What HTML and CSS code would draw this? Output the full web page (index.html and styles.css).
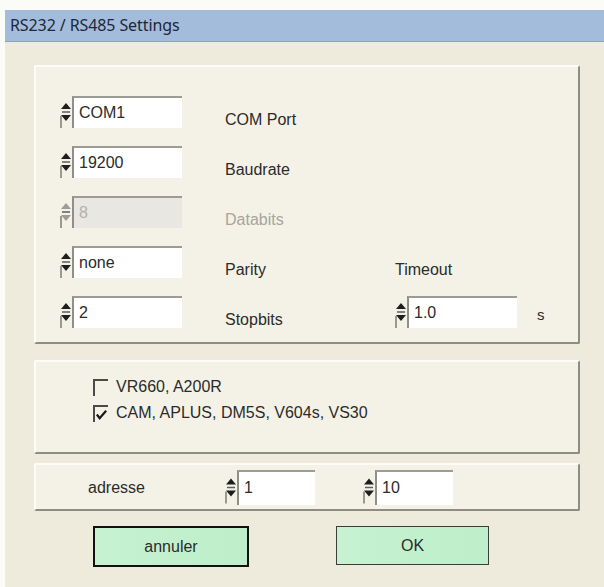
FILE: index.html
```html
<!DOCTYPE html>
<html lang="fr">
<head>
    <meta charset="UTF-8">
    <title>RS232 / RS485 Settings</title>
    <link rel="stylesheet" href="styles.css">
</head>
<body>
    <div class="window">
        <div class="titlebar">RS232 / RS485 Settings</div>
        <div class="client">

            <div class="panel ports">
                <div class="row">
                    <div class="spin"><svg class="arrows" viewBox="0 0 12 32"><polygon points="1,13 6,7 11,13"/><line x1="2" y1="16" x2="10" y2="16"/><polygon points="1,19 6,25 11,19"/><line class="edge" x1="1" y1="20" x2="1" y2="32"/></svg><div class="field">COM1</div></div>
                    <div class="label">COM Port</div>
                </div>
                <div class="row">
                    <div class="spin"><svg class="arrows" viewBox="0 0 12 32"><polygon points="1,13 6,7 11,13"/><line x1="2" y1="16" x2="10" y2="16"/><polygon points="1,19 6,25 11,19"/><line class="edge" x1="1" y1="20" x2="1" y2="32"/></svg><div class="field">19200</div></div>
                    <div class="label">Baudrate</div>
                </div>
                <div class="row disabled">
                    <div class="spin"><svg class="arrows" viewBox="0 0 12 32"><polygon points="1,13 6,7 11,13"/><line x1="2" y1="16" x2="10" y2="16"/><polygon points="1,19 6,25 11,19"/><line class="edge" x1="1" y1="20" x2="1" y2="32"/></svg><div class="field">8</div></div>
                    <div class="label">Databits</div>
                </div>
                <div class="row">
                    <div class="spin"><svg class="arrows" viewBox="0 0 12 32"><polygon points="1,13 6,7 11,13"/><line x1="2" y1="16" x2="10" y2="16"/><polygon points="1,19 6,25 11,19"/><line class="edge" x1="1" y1="20" x2="1" y2="32"/></svg><div class="field">none</div></div>
                    <div class="label">Parity</div>
                    <div class="label">Timeout</div>
                </div>
                <div class="row">
                    <div class="spin"><svg class="arrows" viewBox="0 0 12 32"><polygon points="1,13 6,7 11,13"/><line x1="2" y1="16" x2="10" y2="16"/><polygon points="1,19 6,25 11,19"/><line class="edge" x1="1" y1="20" x2="1" y2="32"/></svg><div class="field">2</div></div>
                    <div class="label">Stopbits</div>
                    <div class="spin"><svg class="arrows" viewBox="0 0 12 32"><polygon points="1,13 6,7 11,13"/><line x1="2" y1="16" x2="10" y2="16"/><polygon points="1,19 6,25 11,19"/><line class="edge" x1="1" y1="20" x2="1" y2="32"/></svg><div class="field">1.0</div></div>
                    <div class="unit">s</div>
                </div>
            </div>

            <div class="panel devices">
                <div class="check">
                    <span class="box"></span>
                    <span>VR660, A200R</span>
                </div>
                <div class="check">
                    <span class="box"><svg viewBox="0 0 14 14"><polyline points="2,7 5,11 12,3"/></svg></span>
                    <span>CAM, APLUS, DM5S, V604s, VS30</span>
                </div>
            </div>

            <div class="panel address">
                <div class="addr-label">adresse</div>
                <div class="spin small"><svg class="arrows" viewBox="0 0 12 32"><polygon points="1,13 6,7 11,13"/><line x1="2" y1="16" x2="10" y2="16"/><polygon points="1,19 6,25 11,19"/><line class="edge" x1="1" y1="20" x2="1" y2="32"/></svg><div class="field">1</div></div>
                <div class="spin small"><svg class="arrows" viewBox="0 0 12 32"><polygon points="1,13 6,7 11,13"/><line x1="2" y1="16" x2="10" y2="16"/><polygon points="1,19 6,25 11,19"/><line class="edge" x1="1" y1="20" x2="1" y2="32"/></svg><div class="field">10</div></div>
            </div>

            <div class="buttons">
                <button type="button" class="btn default">annuler</button>
                <button type="button" class="btn">OK</button>
            </div>
        </div>
    </div>
</body>
</html>
```

FILE: styles.css
```css
body {
    margin: 0;
    background-color: #fbfbf8;
    font-family: "Liberation Sans", Arial, sans-serif;
    color: #2b2b2b;
}

.window {
    margin: 10px 0 0 5px;
    height: 577px;
    background-color: #eeebdd;
    display: flex;
    flex-direction: column;
}

.titlebar {
    height: 31px;
    line-height: 31px;
    padding-left: 5px;
    background-color: #a3bcdc;
    border-bottom: 1px solid #8ba2c0;
    font-family: "Noto Sans", "Open Sans", sans-serif;
    font-size: 16px;
    letter-spacing: -0.1px;
    color: #1c2838;
}

.client {
    padding: 23px 24px 0 29px;
}

.panel {
    background-color: #f4f2e6;
    border: 2px solid;
    border-color: #fdfcf6 #8e8d84 #8e8d84 #fdfcf6;
    border-radius: 2px;
    box-sizing: border-box;
}

/* ports */
.ports {
    height: 279px;
    padding: 29px 0 0 24px;
    display: flex;
    flex-direction: column;
    gap: 18px;
}

.row {
    display: grid;
    grid-template-columns: 165px 170px 142px 1fr;
    height: 32px;
}

.label {
    align-self: end;
    line-height: 20px;
    font-size: 16px;
    margin-bottom: -2px;
}

.unit {
    align-self: center;
    font-size: 15px;
    padding-top: 4px;
}

.spin {
    display: flex;
    width: 122px;
    height: 32px;
}

.arrows {
    width: 12px;
    height: 32px;
    flex: none;
}

.arrows polygon {
    fill: #1e1e1e;
}

.arrows line {
    stroke: #5e5e5a;
    stroke-width: 1.5;
}

.arrows line.edge {
    stroke: #9b9a92;
    stroke-width: 2;
}

.field {
    flex: 1;
    background-color: #fff;
    border-top: 2px solid #9c9b94;
    border-left: 2px solid #8f8e88;
    padding-left: 5px;
    font-size: 16px;
    line-height: 30px;
}

.disabled .field {
    background-color: #e8e7e1;
    color: #b2b1ab;
}

.disabled .arrows polygon {
    fill: #9d9c96;
}

.disabled .label {
    color: #a6a59e;
}

/* devices */
.devices {
    height: 94px;
    margin-top: 16px;
    padding: 15px 0 0 57px;
    display: flex;
    flex-direction: column;
    gap: 6px;
    font-size: 16px;
}

.check {
    display: flex;
    align-items: center;
    gap: 8px;
    height: 20px;
}

.box {
    width: 15px;
    height: 17px;
    border-top: 2px solid #4a4a48;
    border-left: 2px solid #4a4a48;
    box-sizing: border-box;
    display: flex;
    align-items: center;
    justify-content: center;
}

.box svg {
    width: 13px;
    height: 13px;
}

.box polyline {
    fill: none;
    stroke: #1a1a1a;
    stroke-width: 2.4;
}

/* address */
.address {
    height: 48px;
    margin-top: 9px;
    padding-left: 52px;
    display: flex;
    align-items: center;
    font-size: 16px;
}

.addr-label {
    width: 137px;
    padding-top: 2px;
}

.spin.small {
    width: 90px;
    height: 35px;
    margin-right: 48px;
}

.spin.small .arrows {
    height: 35px;
}

.spin.small .field {
    line-height: 32px;
}

/* buttons */
.buttons {
    display: flex;
    padding: 15px 0 0 59px;
    gap: 87px;
}

.btn {
    width: 153px;
    height: 39px;
    background: linear-gradient(90deg, #c6f2d2, #bdeec9);
    border: 1px solid #3c3c38;
    font-family: "Liberation Sans", Arial, sans-serif;
    font-size: 16px;
    color: #2b2b2b;
    padding: 0;
}

.btn.default {
    width: 156px;
    height: 41px;
    border: 2px solid #111;
}
```
